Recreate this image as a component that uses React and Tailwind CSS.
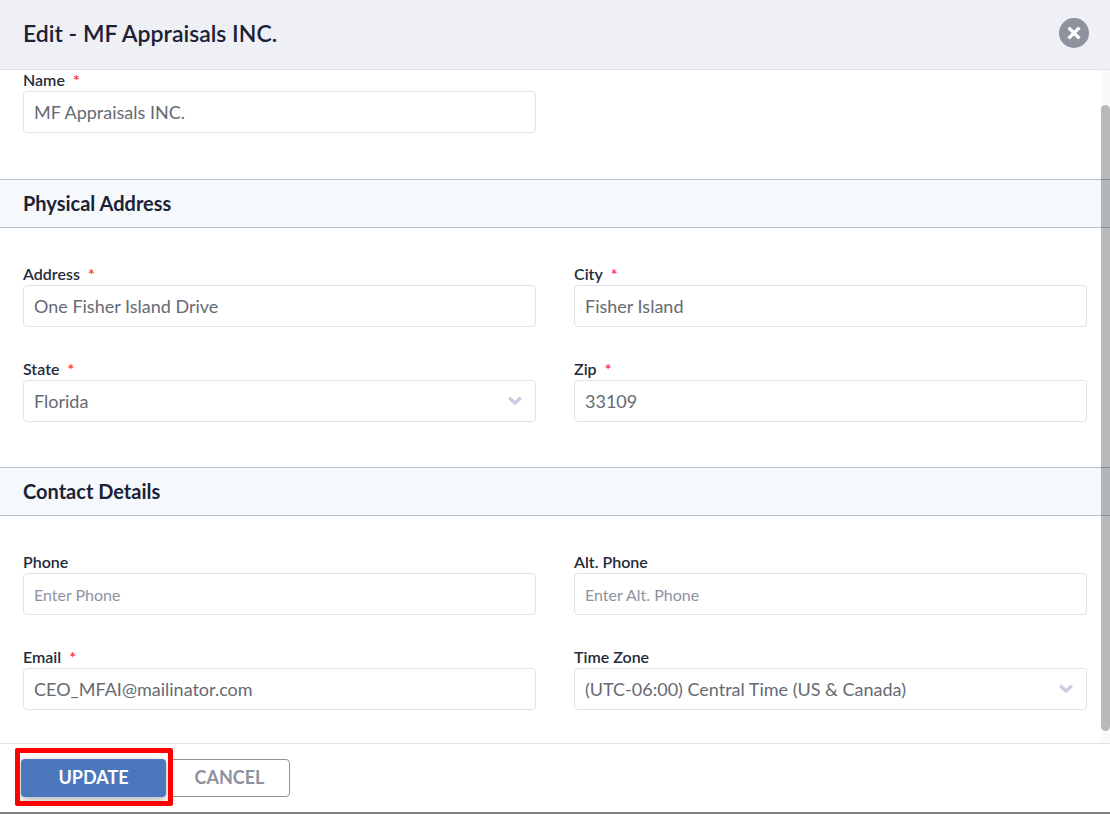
import { useId } from "react";

const inputClass =
  "block h-[42px] w-full rounded-[4px] border border-[#e0e1ee] bg-white px-[10px] text-lg text-[#666a73] outline-none placeholder:text-base placeholder:text-[#8d93a0] focus:border-[#4b77bd]";

function Field({ label, required, options, value, placeholder, type = "text" }) {
  const id = useId();
  return (
    <div>
      <label htmlFor={id} className="block h-[21px] text-base leading-[20px] font-semibold text-[#252b3b]">
        {label}
        {required && <span className="ml-2 font-semibold text-[#ff1f1f]">*</span>}
      </label>
      {options ? (
        <div className="relative">
          <select id={id} defaultValue={value} className={inputClass + " appearance-none pr-10"}>
            {options.map((o) => (
              <option key={o}>{o}</option>
            ))}
          </select>
          <svg
            viewBox="0 0 14 10"
            className="pointer-events-none absolute top-4 right-[14px] h-[10px] w-[14px]"
            fill="none"
            stroke="#c8cddf"
            strokeWidth="3.4"
            aria-hidden="true"
          >
            <path d="M1.2 1.8 7 7l5.8-5.2" />
          </svg>
        </div>
      ) : (
        <input id={id} type={type} defaultValue={value} placeholder={placeholder} className={inputClass} />
      )}
    </div>
  );
}

function Section({ title, children }) {
  return (
    <section>
      <h2 className="flex h-[49px] items-center border-y border-[#b7c3cc] bg-[#f5f9fc] px-[23px] pb-px text-xl font-bold text-[#1c2236]">
        {title}
      </h2>
      <div className="grid grid-cols-2 gap-x-[38px] gap-y-8 px-[23px] pt-9 pb-[45px]">{children}</div>
    </section>
  );
}

export default function App() {
  return (
    <div className="flex min-h-screen flex-col border-b-2 border-[#7f7f7f] bg-white font-['Lato',sans-serif]">
      <header className="flex h-[70px] items-center justify-between border-b border-[#e0e1ee] bg-[#eff0f6] pr-[21px] pb-[3px] pl-[23px]">
        <h1 className="text-[23px] font-semibold text-[#1c2236]">Edit - MF Appraisals INC.</h1>
        <button
          type="button"
          aria-label="Close"
          className="flex size-[30px] items-center justify-center rounded-full bg-[#8d929e]"
        >
          <svg viewBox="0 0 14 14" className="size-[14px]" fill="none" stroke="#fff" strokeWidth="3.4" aria-hidden="true">
            <path d="M1.6 1.6l10.8 10.8M12.4 1.6L1.6 12.4" />
          </svg>
        </button>
      </header>

      <main className="relative flex-1 overflow-hidden">
        <div className="-mb-3">
          <div className="grid grid-cols-2 gap-x-[38px] px-[23px] pb-[46px]">
            <Field label="Name" required value="MF Appraisals INC." />
          </div>
          <Section title="Physical Address">
            <Field label="Address" required value="One Fisher Island Drive" />
            <Field label="City" required value="Fisher Island" />
            <Field label="State" required value="Florida" options={["Florida", "Georgia", "Texas"]} />
            <Field label="Zip" required value="33109" />
          </Section>
          <Section title="Contact Details">
            <Field label="Phone" type="tel" placeholder="Enter Phone" />
            <Field label="Alt. Phone" type="tel" placeholder="Enter Alt. Phone" />
            <Field label="Email" type="email" required value="CEO_MFAI@mailinator.com" />
            <Field
              label="Time Zone"
              value="(UTC-06:00) Central Time (US & Canada)"
              options={["(UTC-06:00) Central Time (US & Canada)", "(UTC-05:00) Eastern Time (US & Canada)"]}
            />
          </Section>
        </div>
        <div className="absolute inset-y-0 right-0 w-[9px] bg-black/[0.02] pt-[35px] pb-3" aria-hidden="true">
          <div className="h-full rounded-[5px] bg-[#0a0c17]/[0.27]" />
        </div>
      </main>

      <footer className="flex h-[69px] items-start gap-[3px] border-t border-[#e0e1ee] px-[21px] pt-[15px]">
        <div className="relative z-10">
          <button
            type="button"
            className="h-[38px] w-[145px] rounded-[4px] bg-[#4b77bd] pb-[2px] text-lg font-bold text-white shadow-[0_3px_8px_rgba(0,0,0,0.3)]"
          >
            UPDATE
          </button>
          <div className="pointer-events-none absolute -top-[11px] -right-[7px] -bottom-[9px] -left-[6px] rounded-[2px] border-5 border-[#ff0000]" />
        </div>
        <button
          type="button"
          className="h-[38px] w-[121px] rounded-[4px] border border-[#8d929e] bg-white pb-[2px] text-lg font-bold text-[#8d929e]"
        >
          CANCEL
        </button>
      </footer>
    </div>
  );
}
